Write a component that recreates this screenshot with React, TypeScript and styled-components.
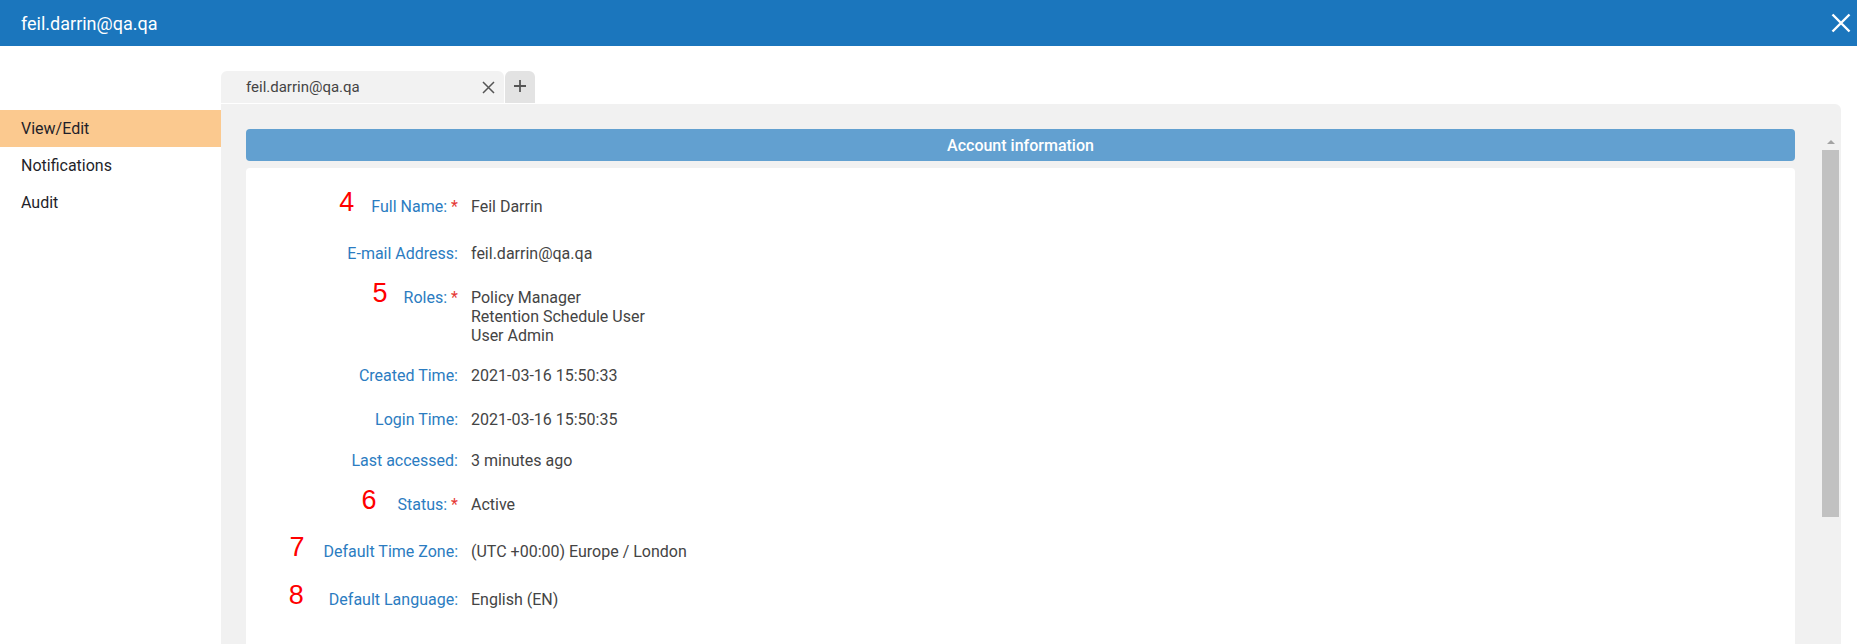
import styled, { createGlobalStyle } from 'styled-components'

const GlobalStyle = createGlobalStyle`
  html, body {
    margin: 0;
    padding: 0;
    height: 644px;
    overflow: hidden;
    background: #fff;
  }
  body {
    font-family: Roboto, 'Liberation Sans', Arial, sans-serif;
  }
`

type Field = {
  label: string
  values: string[]
  required?: boolean
  mark?: string
  markGap?: number
  space: number
}

const fields: Field[] = [
  { label: 'Full Name:', values: ['Feil Darrin'], required: true, mark: '4', markGap: 17, space: 29 },
  { label: 'E-mail Address:', values: ['feil.darrin@qa.qa'], space: 28 },
  {
    label: 'Roles:',
    values: ['Policy Manager', 'Retention Schedule User', 'User Admin'],
    required: true,
    mark: '5',
    markGap: 16,
    space: 25,
  },
  { label: 'Created Time:', values: ['2021-03-16 15:50:33'], space: 21 },
  { label: 'Login Time:', values: ['2021-03-16 15:50:35'], space: 25 },
  { label: 'Last accessed:', values: ['3 minutes ago'], space: 22 },
  { label: 'Status:', values: ['Active'], required: true, mark: '6', markGap: 21, space: 25 },
  { label: 'Default Time Zone:', values: ['(UTC +00:00) Europe / London'], mark: '7', markGap: 19, space: 28 },
  { label: 'Default Language:', values: ['English (EN)'], mark: '8', markGap: 25, space: 29 },
]

const menu = ['View/Edit', 'Notifications', 'Audit']

export default function App() {
  return (
    <>
      <GlobalStyle />
      <Wrapper>
        <TopBar>
          <Title>feil.darrin@qa.qa</Title>
          <CloseButton aria-label='close'>
            <svg width='20' height='20' viewBox='0 0 20 20'>
              <path d='M1.5 1.5 L18.5 18.5 M18.5 1.5 L1.5 18.5' stroke='#fff' strokeWidth='2.4' />
            </svg>
          </CloseButton>
        </TopBar>
        <Body>
          <Sidebar>
            {menu.map((item, i) => (
              <MenuItem key={item} $active={i === 0}>
                {item}
              </MenuItem>
            ))}
          </Sidebar>
          <Main>
            <Tabs>
              <Tab>
                <TabLabel>feil.darrin@qa.qa</TabLabel>
                <svg width='13' height='13' viewBox='0 0 13 13'>
                  <path d='M1 1 L12 12 M12 1 L1 12' stroke='#555' strokeWidth='1.5' />
                </svg>
              </Tab>
              <AddTab>
                <svg width='14' height='14' viewBox='0 0 14 14'>
                  <path d='M7 1 V13 M1 7 H13' stroke='#555' strokeWidth='1.8' />
                </svg>
              </AddTab>
            </Tabs>
            <Panel>
              <Content>
                <SectionHeader>Account information</SectionHeader>
                <Card>
                  {fields.map((f) => (
                    <Row key={f.label} $space={f.space}>
                      <Label>
                        {f.mark && <Mark $gap={f.markGap ?? 18}>{f.mark}</Mark>}
                        {f.label}
                        {f.required && <Required>*</Required>}
                      </Label>
                      <Value>
                        {f.values.map((v) => (
                          <div key={v}>{v}</div>
                        ))}
                      </Value>
                    </Row>
                  ))}
                </Card>
              </Content>
              <ScrollTrack>
                <ScrollArrow />
                <ScrollThumb />
              </ScrollTrack>
            </Panel>
          </Main>
        </Body>
      </Wrapper>
    </>
  )
}

const Wrapper = styled.div`
  display: flex;
  flex-direction: column;
  height: 644px;
  overflow: hidden;
`

const TopBar = styled.header`
  height: 46px;
  flex-shrink: 0;
  background: #1b76bd;
  display: flex;
  align-items: center;
  justify-content: space-between;
  padding: 0 5px 0 21px;
`

const Title = styled.div`
  color: #fff;
  font-size: 18px;
`

const CloseButton = styled.button`
  border: 0;
  background: none;
  padding: 0;
  width: 22px;
  height: 22px;
  display: flex;
  align-items: center;
  justify-content: center;
  cursor: pointer;
`

const Body = styled.div`
  flex: 1;
  display: flex;
  min-height: 0;
`

const Sidebar = styled.nav`
  width: 221px;
  flex-shrink: 0;
  padding-top: 64px;
`

const MenuItem = styled.div<{ $active?: boolean }>`
  height: 37px;
  display: flex;
  align-items: center;
  padding-left: 21px;
  font-size: 16px;
  color: #1f1f2a;
  background: ${(p) => (p.$active ? '#fbc98f' : 'transparent')};
`

const Main = styled.div`
  flex: 1;
  display: flex;
  flex-direction: column;
  padding: 25px 16px 0 0;
  min-width: 0;
`

const Tabs = styled.div`
  display: flex;
  height: 32px;
  margin-bottom: 1px;
  gap: 1px;
`

const Tab = styled.div`
  width: 283px;
  background: #f2f2f2;
  border-radius: 6px 6px 0 0;
  display: flex;
  align-items: center;
  justify-content: space-between;
  padding: 0 9px 0 25px;
  box-sizing: border-box;
`

const TabLabel = styled.span`
  font-size: 15px;
  color: #444;
`

const AddTab = styled.div`
  width: 30px;
  background: #e3e3e3;
  border-radius: 6px 6px 0 0;
  display: flex;
  align-items: center;
  justify-content: center;
  padding-bottom: 2px;
  box-sizing: border-box;
`

const Panel = styled.section`
  flex: 1;
  background: #f1f1f1;
  border-top-right-radius: 6px;
  display: flex;
  padding: 25px 2px 0 25px;
  min-height: 0;
`

const Content = styled.div`
  flex: 1;
  display: flex;
  flex-direction: column;
  margin-right: 27px;
`

const SectionHeader = styled.div`
  height: 32px;
  flex-shrink: 0;
  background: #62a0d0;
  border-radius: 4px;
  color: #fff;
  font-size: 16px;
  font-weight: 500;
  display: flex;
  align-items: center;
  justify-content: center;
  margin-bottom: 7px;
`

const Card = styled.div`
  flex: 1;
  background: #fff;
  border-radius: 4px 4px 0 0;
  display: flex;
  flex-direction: column;
  padding-bottom: 40px;
`

const Row = styled.div<{ $space: number }>`
  display: flex;
  align-items: flex-start;
  margin-top: ${(p) => p.$space}px;
  font-size: 16px;
  line-height: 19px;
`

const Label = styled.div`
  width: 212px;
  flex-shrink: 0;
  text-align: right;
  white-space: nowrap;
  color: #2b7cc1;
`

const Mark = styled.span<{ $gap: number }>`
  font-family: 'Liberation Sans', Arial, sans-serif;
  font-size: 27px;
  line-height: 0;
  color: #f00;
  position: relative;
  top: -1px;
  margin-right: ${(p) => p.$gap}px;
`

const Required = styled.span`
  color: #e53935;
  margin-left: 4px;
`

const Value = styled.div`
  margin-left: 13px;
  color: #444;
`

const ScrollTrack = styled.div`
  width: 17px;
  flex-shrink: 0;
  margin-top: 1px;
  display: flex;
  flex-direction: column;
  align-items: center;
`

const ScrollArrow = styled.div`
  width: 0;
  height: 0;
  border-left: 4px solid transparent;
  border-right: 4px solid transparent;
  border-bottom: 4px solid #a3a3a3;
  margin-top: 10px;
  margin-bottom: 6px;
`

const ScrollThumb = styled.div`
  width: 17px;
  height: 367px;
  background: #c1c1c1;
`
